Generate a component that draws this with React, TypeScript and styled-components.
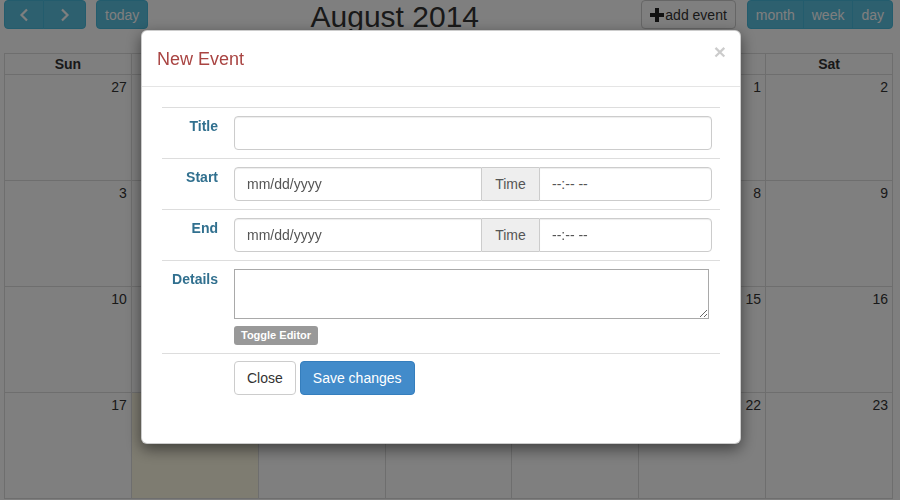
import styled, { createGlobalStyle } from 'styled-components'

const GlobalStyle = createGlobalStyle`
  * { box-sizing: border-box; }
  html, body {
    margin: 0;
    padding: 0;
    height: 500px;
    overflow: hidden;
    background: #fff;
  }
  body {
    font-family: 'Liberation Sans', Arial, sans-serif;
    font-size: 14px;
    line-height: 1.42857;
    color: #333;
  }
`

const weekDays = ['Sun', 'Mon', 'Tue', 'Wed', 'Thu', 'Fri', 'Sat']
const weeks = [
  [27, 28, 29, 30, 31, 1, 2],
  [3, 4, 5, 6, 7, 8, 9],
  [10, 11, 12, 13, 14, 15, 16],
  [17, 18, 19, 20, 21, 22, 23],
]
const TODAY = 18

const ChevronIcon = ({ dir }: { dir: 'left' | 'right' }) => (
  <svg width="10" height="14" viewBox="0 0 10 14">
    <polyline
      points={dir === 'left' ? '8,1.5 2.5,7 8,12.5' : '2,1.5 7.5,7 2,12.5'}
      fill="none"
      stroke="#fff"
      strokeWidth="2.2"
    />
  </svg>
)

const PlusIcon = () => (
  <svg width="14" height="14" viewBox="0 0 14 14">
    <path d="M5 0h4v5h5v4H9v5H5V9H0V5h5z" fill="#222" />
  </svg>
)

const App = () => {
  return (
    <>
      <GlobalStyle />
      <CalendarWrap>
        <Toolbar>
          <ToolbarSide>
            <BtnGroup>
              <FcButton $width={40}>
                <ChevronIcon dir="left" />
              </FcButton>
              <FcButton $width={43}>
                <ChevronIcon dir="right" />
              </FcButton>
            </BtnGroup>
            <FcButton>today</FcButton>
          </ToolbarSide>
          <Title>August 2014</Title>
          <ToolbarSide $gap={11}>
            <FcButton $light>
              <PlusIcon />
              add event
            </FcButton>
            <BtnGroup>
              <FcButton>month</FcButton>
              <FcButton>week</FcButton>
              <FcButton>day</FcButton>
            </BtnGroup>
          </ToolbarSide>
        </Toolbar>
        <Grid>
          {weekDays.map((d) => (
            <HeadCell key={d}>{d}</HeadCell>
          ))}
          {weeks.map((week, wi) =>
            week.map((day) => (
              <DayCell key={`${wi}-${day}`} $today={wi === 3 && day === TODAY}>
                {day}
              </DayCell>
            ))
          )}
        </Grid>
      </CalendarWrap>

      <Backdrop />
      <Modal>
        <ModalHeader>
          <ModalTitle>New Event</ModalTitle>
          <CloseX>×</CloseX>
        </ModalHeader>
        <ModalBody>
          <FormRow>
            <FieldLabel>Title</FieldLabel>
            <FieldCell>
              <TextInput type="text" />
            </FieldCell>
          </FormRow>
          <FormRow>
            <FieldLabel>Start</FieldLabel>
            <FieldCell>
              <InputGroup>
                <DateInput type="text" placeholder="mm/dd/yyyy" />
                <Addon>Time</Addon>
                <TimeInput type="text" placeholder="--:-- --" />
              </InputGroup>
            </FieldCell>
          </FormRow>
          <FormRow>
            <FieldLabel>End</FieldLabel>
            <FieldCell>
              <InputGroup>
                <DateInput type="text" placeholder="mm/dd/yyyy" />
                <Addon>Time</Addon>
                <TimeInput type="text" placeholder="--:-- --" />
              </InputGroup>
            </FieldCell>
          </FormRow>
          <FormRow>
            <FieldLabel>Details</FieldLabel>
            <FieldCell>
              <DetailsArea />
              <ToggleLabel>Toggle Editor</ToggleLabel>
            </FieldCell>
          </FormRow>
          <FormRow>
            <span />
            <FieldCell>
              <Actions>
                <Button>Close</Button>
                <Button $primary>Save changes</Button>
              </Actions>
            </FieldCell>
          </FormRow>
        </ModalBody>
      </Modal>
    </>
  )
}

const CalendarWrap = styled.div`
  width: 889px;
  margin-left: 4px;
`

const Toolbar = styled.div`
  display: flex;
  align-items: flex-start;
  height: 29px;
  margin-bottom: 24px;
`

const ToolbarSide = styled.div<{ $gap?: number }>`
  display: flex;
  gap: ${(p) => p.$gap ?? 10}px;
`

const Title = styled.h2`
  flex: 1;
  margin: 2px 0 0;
  text-align: center;
  font-size: 30px;
  font-weight: normal;
  line-height: 29px;
  color: #333;
`

const BtnGroup = styled.div`
  display: flex;
  & > button:not(:first-child) {
    border-top-left-radius: 0;
    border-bottom-left-radius: 0;
    margin-left: -1px;
  }
  & > button:not(:last-child) {
    border-top-right-radius: 0;
    border-bottom-right-radius: 0;
  }
`

const FcButton = styled.button<{ $light?: boolean; $width?: number }>`
  display: flex;
  align-items: center;
  justify-content: center;
  gap: 1px;
  height: 29px;
  ${(p) => (p.$width ? `width: ${p.$width}px;` : '')}
  padding: 0 8px;
  font-family: 'Liberation Sans', Arial, sans-serif;
  font-size: 14px;
  border-radius: 4px;
  border: 1px solid ${(p) => (p.$light ? '#ccc' : '#46b8da')};
  background: ${(p) => (p.$light ? '#fff' : '#5bc0de')};
  color: ${(p) => (p.$light ? '#333' : '#fff')};
`

const Grid = styled.div`
  display: grid;
  grid-template-columns: repeat(7, 1fr);
  border-top: 1px solid #ddd;
  border-left: 1px solid #ddd;
`

const HeadCell = styled.div`
  height: 21px;
  line-height: 20px;
  text-align: center;
  font-weight: bold;
  border-right: 1px solid #ddd;
  border-bottom: 1px solid #ddd;
`

const DayCell = styled.div<{ $today?: boolean }>`
  height: 106px;
  padding: 2px 4px;
  text-align: right;
  line-height: 20px;
  border-right: 1px solid #ddd;
  border-bottom: 1px solid #ddd;
  background: ${(p) => (p.$today ? '#fcf8e3' : 'transparent')};
`

const Backdrop = styled.div`
  position: fixed;
  inset: 0;
  background: rgba(0, 0, 0, 0.5);
`

const Modal = styled.div`
  position: fixed;
  left: 141px;
  top: 30px;
  width: 600px;
  background: #fff;
  border: 1px solid rgba(0, 0, 0, 0.2);
  border-radius: 6px;
  box-shadow: 0 5px 15px rgba(0, 0, 0, 0.5);
`

const ModalHeader = styled.div`
  display: flex;
  justify-content: space-between;
  align-items: flex-start;
  padding: 15px 15px 14px;
  border-bottom: 1px solid #e5e5e5;
`

const ModalTitle = styled.h4`
  margin: 0;
  font-size: 18px;
  font-weight: normal;
  line-height: 26px;
  color: #a94442;
`

const CloseX = styled.span`
  margin: -5px -1px 0 0;
  font-size: 21px;
  font-weight: bold;
  line-height: 1;
  color: #000;
  opacity: 0.2;
`

const ModalBody = styled.div`
  padding: 20px 20px 40px;
`

const FormRow = styled.div`
  display: grid;
  grid-template-columns: 64px 1fr;
  border-top: 1px solid #ddd;
`

const FieldLabel = styled.div`
  padding: 8px;
  text-align: right;
  font-weight: bold;
  line-height: 20px;
  color: #31708f;
`

const FieldCell = styled.div`
  padding: 8px;
`

const TextInput = styled.input`
  display: block;
  width: 100%;
  height: 34px;
  padding: 6px 12px;
  font-family: 'Liberation Sans', Arial, sans-serif;
  font-size: 14px;
  color: #555;
  background: #fff;
  border: 1px solid #ccc;
  border-radius: 4px;
  box-shadow: inset 0 1px 1px rgba(0, 0, 0, 0.075);
  outline: none;
  &::placeholder {
    color: #555;
    opacity: 1;
  }
`

const InputGroup = styled.div`
  display: flex;
`

const DateInput = styled(TextInput)`
  flex: 0 0 248px;
  border-radius: 4px 0 0 4px;
`

const Addon = styled.span`
  flex: 0 0 57px;
  height: 34px;
  line-height: 32px;
  text-align: center;
  color: #555;
  background: #eee;
  border-top: 1px solid #ccc;
  border-bottom: 1px solid #ccc;
`

const TimeInput = styled(TextInput)`
  flex: 1;
  border-radius: 0 4px 4px 0;
`

const DetailsArea = styled.textarea`
  display: block;
  width: 475px;
  height: 50px;
  border: 1px solid #a9a9a9;
  font-family: 'Liberation Sans', Arial, sans-serif;
  font-size: 14px;
`

const ToggleLabel = styled.span`
  display: block;
  width: max-content;
  margin-top: 7px;
  padding: 3px 7px 4px;
  font-size: 11px;
  font-weight: bold;
  line-height: 12px;
  color: #fff;
  background: #999;
  border-radius: 3px;
`

const Actions = styled.div`
  display: flex;
  gap: 4px;
  margin-top: -1px;
`

const Button = styled.button<{ $primary?: boolean }>`
  height: 34px;
  padding: 6px 12px;
  font-family: 'Liberation Sans', Arial, sans-serif;
  font-size: 14px;
  line-height: 20px;
  border-radius: 4px;
  border: 1px solid ${(p) => (p.$primary ? '#357ebd' : '#ccc')};
  background: ${(p) => (p.$primary ? '#428bca' : '#fff')};
  color: ${(p) => (p.$primary ? '#fff' : '#333')};
`

export default App
